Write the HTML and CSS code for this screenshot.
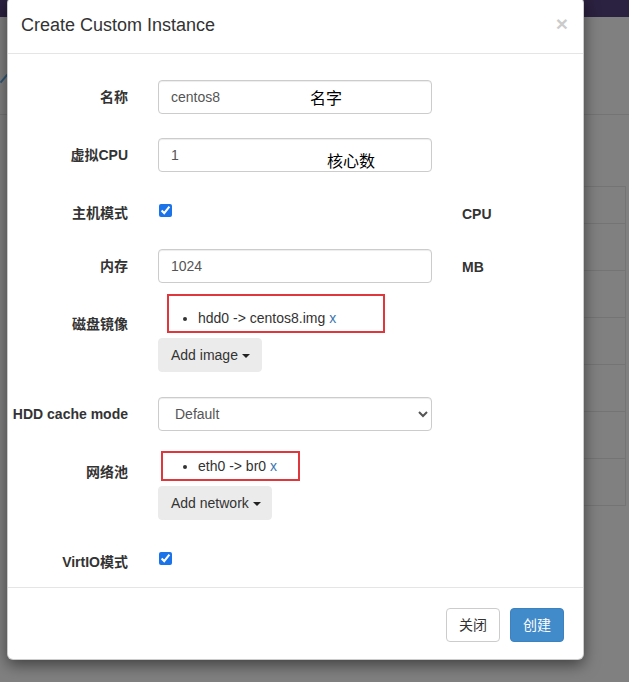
FILE: index.html
```html
<!DOCTYPE html>
<html lang="zh">
<head>
<meta charset="utf-8">
<title>Create Custom Instance</title>
<link rel="stylesheet" href="styles.css">
</head>
<body>
<div class="page">
  <div class="topbar"></div>
  <div class="bg-head"><span class="bg-stroke"></span></div>
  <div class="bg-table">
    <div class="bg-row bg-row-first"></div>
    <div class="bg-row"></div>
    <div class="bg-row"></div>
    <div class="bg-row"></div>
    <div class="bg-row"></div>
    <div class="bg-row"></div>
    <div class="bg-row"></div>
  </div>
</div>

<div class="modal">
  <div class="modal-header">
    <button class="close" type="button">×</button>
    <h4 class="modal-title">Create Custom Instance</h4>
  </div>
  <div class="modal-body">
    <form class="form">
      <div class="row">
        <label class="lbl">名称</label>
        <div class="field">
          <input class="fc" type="text" value="centos8">
          <span class="note note-name">名字</span>
        </div>
      </div>
      <div class="row">
        <label class="lbl">虚拟CPU</label>
        <div class="field">
          <input class="fc" type="text" value="1">
          <span class="note note-cpu">核心数</span>
        </div>
      </div>
      <div class="row row-check">
        <label class="lbl">主机模式</label>
        <div class="field field-check"><input class="chk" type="checkbox" checked></div>
        <span class="unit">CPU</span>
      </div>
      <div class="row">
        <label class="lbl">内存</label>
        <div class="field"><input class="fc" type="text" value="1024"></div>
        <span class="unit">MB</span>
      </div>
      <div class="row">
        <label class="lbl">磁盘镜像</label>
        <div class="field field-list">
          <ul class="items">
            <li>hdd0 -&gt; centos8.img <a class="rm" href="#">x</a></li>
          </ul>
          <button class="btn btn-default btn-img" type="button">Add image <span class="caret"></span></button>
          <span class="mark mark-img"></span>
        </div>
      </div>
      <div class="row">
        <label class="lbl">HDD cache mode</label>
        <div class="field">
          <select class="fc fc-select">
            <option>Default</option>
          </select>
        </div>
      </div>
      <div class="row">
        <label class="lbl">网络池</label>
        <div class="field field-list">
          <ul class="items">
            <li>eth0 -&gt; br0 <a class="rm" href="#">x</a></li>
          </ul>
          <button class="btn btn-default btn-net" type="button">Add network <span class="caret"></span></button>
          <span class="mark mark-net"></span>
        </div>
      </div>
      <div class="row row-check">
        <label class="lbl">VirtIO模式</label>
        <div class="field field-check field-check-b"><input class="chk" type="checkbox" checked></div>
      </div>
    </form>
  </div>
  <div class="modal-footer">
    <button class="btn btn-white" type="button">关闭</button>
    <button class="btn btn-primary" type="button">创建</button>
  </div>
</div>
</body>
</html>
```

FILE: styles.css
```css
* { box-sizing: border-box; }

html, body {
  margin: 0;
  padding: 0;
}

body {
  width: 629px;
  height: 682px;
  overflow: hidden;
  position: relative;
  background: #808080;
  font-family: "Liberation Sans", "Noto Sans CJK SC", sans-serif;
  font-size: 14px;
  line-height: 1.42857;
  color: #333;
}

/* background page (dimmed) */
.page {
  width: 629px;
}

.topbar {
  height: 17px;
  background: #2b2140;
}

.bg-head {
  height: 98px;
  padding-top: 56px;
  border-bottom: 1px solid #747474;
}

.bg-stroke {
  display: block;
  width: 2px;
  height: 11px;
  margin-left: 3px;
  background: #2f5878;
  transform: rotate(40deg);
}

.bg-table {
  margin: 71px 3px 0 300px;
  border-top: 1px solid #747474;
  border-right: 1px solid #747474;
}

.bg-row {
  height: 47px;
  border-bottom: 1px solid #747474;
}

.bg-row-first {
  height: 37px;
}

/* modal */
.modal {
  position: absolute;
  left: 7px;
  top: -3px;
  width: 577px;
  background: #fff;
  border: 1px solid rgba(0, 0, 0, 0.2);
  border-radius: 6px;
  box-shadow: 0 5px 15px rgba(0, 0, 0, 0.5);
}

.modal-header {
  padding: 15px 15px 14px 13px;
  border-bottom: 1px solid #e5e5e5;
}

.modal-title {
  margin: 0;
  font-size: 18px;
  font-weight: normal;
  line-height: 1.42857;
  color: #333;
}

.close {
  float: right;
  margin-top: 0;
  margin-right: 0;
  padding: 0;
  border: 0;
  background: transparent;
  font-family: "Liberation Sans", sans-serif;
  font-size: 21px;
  font-weight: bold;
  line-height: 1;
  color: #000;
  opacity: 0.2;
  text-shadow: 0 1px 0 #fff;
}

.modal-body {
  padding: 26px 0 15px 0;
}

.form {
  display: flex;
  flex-direction: column;
  gap: 24px;
}

.row {
  display: grid;
  grid-template-columns: 120px 274px auto;
  column-gap: 30px;
  align-items: start;
}

.lbl {
  text-align: right;
  font-weight: bold;
  padding-top: 7px;
  line-height: 20px;
  white-space: nowrap;
}

.field {
  position: relative;
}

.field-check {
  min-height: 29px;
  padding-top: 8px;
}

.field-check-b {
  min-height: 27px;
  padding-top: 7px;
}

.chk {
  display: block;
  width: 13px;
  height: 13px;
  margin: 0 0 0 1px;
  accent-color: #1a73e8;
}

.unit {
  font-weight: bold;
  padding-top: 8px;
  line-height: 20px;
}

.fc {
  display: block;
  width: 100%;
  height: 34px;
  padding: 6px 12px;
  font-family: "Liberation Sans", sans-serif;
  font-size: 14px;
  line-height: 1.42857;
  color: #555;
  background: #fff;
  border: 1px solid #ccc;
  border-radius: 4px;
  box-shadow: inset 0 1px 1px rgba(0, 0, 0, 0.075);
}

.fc-select {
  padding: 6px 10px 6px 12px;
}

.note {
  position: absolute;
  font-family: "Noto Sans CJK SC", sans-serif;
  font-size: 16px;
  line-height: 20px;
  color: #000;
  white-space: nowrap;
}

.note-name {
  left: 152px;
  top: 7px;
}

.note-cpu {
  left: 169px;
  top: 12px;
}

.field-list {
  padding: 1px 0;
}

.items {
  margin: 0 0 10px;
  padding-left: 40px;
  line-height: 20px;
}

.rm {
  color: #3a76b0;
  text-decoration: none;
}

.mark {
  position: absolute;
  border: 2px solid #e0373d;
}

.mark-img {
  left: 9px;
  top: -13px;
  width: 218px;
  height: 39px;
}

.mark-net {
  left: 3px;
  top: -4px;
  width: 139px;
  height: 30px;
}

.btn {
  display: inline-block;
  height: 34px;
  padding: 6px 12px;
  font-family: "Liberation Sans", "Noto Sans CJK SC", sans-serif;
  font-size: 14px;
  line-height: 20px;
  border: 1px solid transparent;
  border-radius: 4px;
  white-space: nowrap;
}

.btn-default {
  background: #ebebeb;
  border-color: #ebebeb;
  color: #333;
}

.btn-img {
  width: 104px;
  padding: 6px 0 6px 12px;
  text-align: left;
}

.btn-net {
  width: 114px;
  padding: 6px 0 6px 12px;
  text-align: left;
}

.caret {
  display: inline-block;
  width: 0;
  height: 0;
  margin-left: 0;
  vertical-align: middle;
  border-top: 4px solid #222;
  border-left: 4px solid transparent;
  border-right: 4px solid transparent;
}

.modal-footer {
  display: flex;
  justify-content: flex-end;
  gap: 10px;
  padding: 20px 19px 17px;
  border-top: 1px solid #e5e5e5;
}

.btn-white {
  width: 54px;
  padding: 6px 0;
  background: #fff;
  border-color: #ccc;
  color: #333;
  text-align: center;
}

.btn-primary {
  width: 54px;
  padding: 6px 0;
  background: #428bca;
  border-color: #3b82c0;
  color: #fff;
  text-align: center;
}
```
